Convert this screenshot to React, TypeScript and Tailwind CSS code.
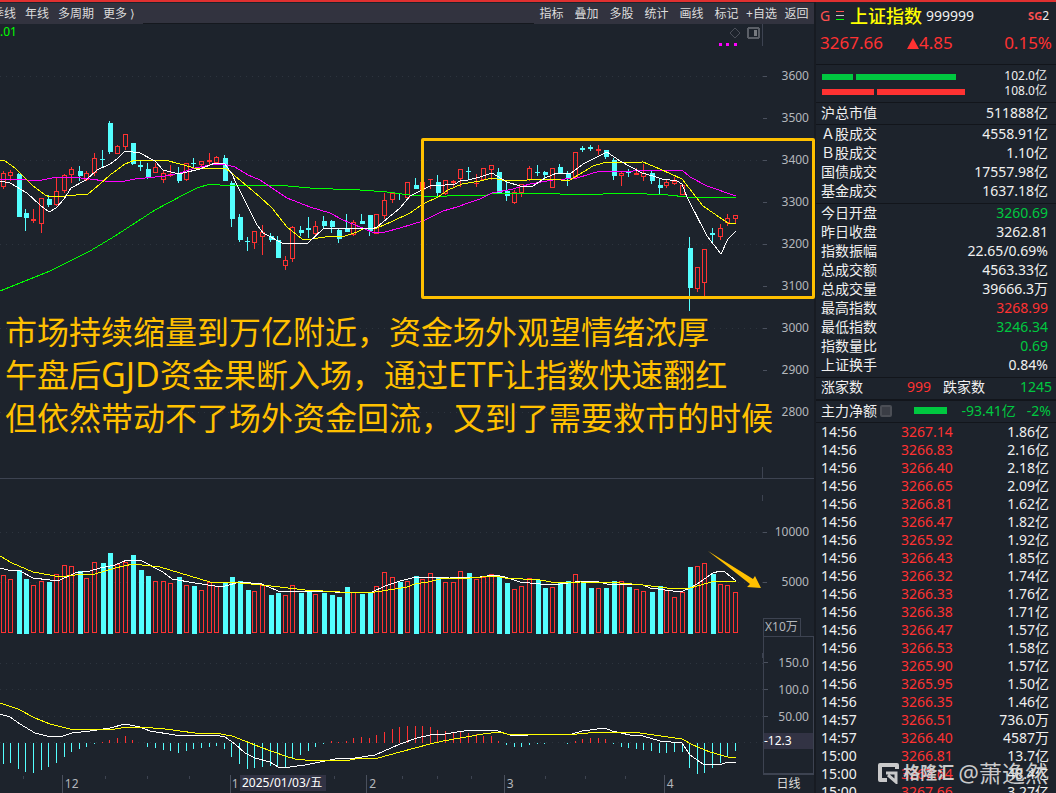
import React from 'react';

// direction (1 up, 0 down), high, body top, body bottom, low, volume top, macd bar
type Bar = [number, number, number, number, number, number, number];

const bars: Bar[] = [
  [1, 171, 173, 187, 189, 575, -21], [1, 170, 172, 176, 181, 579, -20], [0, 173, 174, 217, 217, 570, -26],
  [0, 209, 213, 218, 231, 579, -29], [1, 209, 219, 221, 223, 585, -30], [1, 198, 198, 224, 233, 581, -27],
  [0, 195, 199, 205, 207, 582, -24], [1, 178, 191, 205, 206, 574, -20], [1, 174, 175, 191, 193, 565, -14],
  [1, 167, 169, 175, 183, 566, -9], [0, 166, 171, 176, 181, 571, -6], [1, 171, 173, 180, 181, 578, -4],
  [1, 153, 158, 173, 176, 562, -1], [0, 150, 159, 160, 167, 563, 1], [0, 121, 123, 152, 154, 553, 3],
  [1, 145, 146, 154, 154, 564, 5], [1, 134, 134, 147, 150, 562, 7], [0, 143, 143, 164, 165, 555, 3],
  [0, 161, 165, 167, 171, 570, 0], [0, 163, 169, 177, 179, 576, -4], [1, 163, 167, 173, 173, 581, -5],
  [1, 170, 173, 180, 183, 581, -7], [1, 165, 174, 176, 177, 583, -8], [0, 167, 174, 181, 183, 577, -10],
  [1, 163, 163, 180, 181, 585, -8], [0, 158, 163, 164, 168, 586, -6], [1, 161, 161, 165, 169, 590, -5],
  [1, 153, 160, 162, 165, 582, -4], [1, 156, 157, 163, 163, 586, -3], [0, 155, 158, 181, 181, 583, -6],
  [0, 181, 183, 219, 227, 577, -14], [0, 214, 217, 240, 242, 581, -21], [0, 237, 241, 242, 251, 590, -26],
  [1, 231, 231, 243, 249, 591, -25], [1, 225, 232, 237, 255, 585, -24], [0, 233, 236, 240, 242, 595, -23],
  [0, 236, 240, 258, 258, 593, -24], [1, 256, 260, 266, 270, 595, -24], [1, 226, 227, 259, 262, 585, -16],
  [0, 226, 230, 233, 236, 593, -12], [0, 217, 228, 230, 238, 590, -8], [1, 221, 226, 234, 236, 594, -4],
  [0, 216, 221, 226, 228, 593, -1], [0, 220, 221, 227, 233, 595, 2], [0, 229, 230, 239, 243, 597, 1],
  [0, 214, 229, 232, 232, 587, 2], [1, 220, 222, 235, 236, 592, 5], [0, 214, 221, 224, 224, 594, 6],
  [0, 215, 215, 231, 236, 592, 5], [1, 214, 214, 234, 234, 586, 8], [1, 193, 200, 216, 219, 572, 11],
  [1, 193, 193, 200, 203, 577, 14], [0, 193, 193, 194, 200, 582, 16], [1, 182, 182, 198, 198, 581, 17],
  [0, 178, 185, 189, 189, 576, 17], [1, 182, 182, 190, 190, 579, 17], [1, 179, 179, 180, 189, 573, 16],
  [0, 175, 182, 193, 196, 577, 13], [1, 180, 180, 194, 195, 582, 12], [1, 180, 181, 183, 187, 582, 11],
  [1, 169, 169, 179, 187, 571, 11], [0, 167, 171, 172, 180, 573, 10], [1, 174, 183, 184, 187, 579, 9],
  [1, 168, 168, 180, 180, 577, 7], [1, 165, 165, 170, 180, 574, 7], [0, 168, 172, 193, 194, 577, 2],
  [0, 182, 191, 196, 201, 583, -2], [1, 190, 192, 203, 204, 589, -4], [1, 184, 184, 193, 197, 586, -4],
  [1, 166, 168, 180, 181, 578, -2], [0, 165, 172, 173, 176, 580, -1], [0, 171, 172, 175, 180, 588, -1],
  [1, 168, 168, 188, 188, 587, 0], [0, 164, 167, 173, 174, 583, 0], [0, 171, 173, 178, 186, 581, -1],
  [1, 152, 152, 177, 178, 574, 2], [0, 146, 148, 150, 152, 581, 4], [0, 145, 147, 149, 151, 588, 5],
  [1, 145, 149, 151, 155, 588, 5], [0, 150, 150, 157, 159, 588, 4], [0, 158, 160, 176, 180, 581, -1],
  [1, 171, 173, 176, 186, 581, -4], [0, 169, 172, 173, 177, 587, -5], [1, 168, 173, 175, 175, 589, -6],
  [1, 164, 173, 177, 181, 591, -7], [0, 171, 173, 181, 184, 592, -8], [0, 178, 185, 188, 194, 586, -10],
  [1, 180, 182, 186, 188, 590, -10], [1, 177, 181, 184, 185, 597, -9], [1, 184, 185, 195, 195, 592, -9],
  [0, 237, 248, 288, 311, 567, -25], [1, 267, 267, 289, 292, 566, -31], [1, 249, 249, 283, 296, 563, -30],
  [0, 228, 233, 235, 244, 574, -25], [1, 224, 228, 237, 240, 584, -20], [1, 214, 218, 223, 226, 585, -13],
  [1, 215, 215, 219, 224, 592, -8],
];

const barX = (i: number) => Math.floor(1 + i * 7.63);

const UP = '#ff3232';
const DOWN = '#54ffff';

const priceLines = [
  {
    color: '#00ff00',
    points:
      '0,291 15,285 50,271 90,251 115,236 135,223 155,210 185,194 197,188 210,184 220,185 253,186 277,185 310,188 333,189 360,190 387,192 410,195 423,196 447,196 487,195 493,193 557,193 560,194 603,194 607,193 643,193 647,194 665,194 668,195 687,197 736,197',
  },
  {
    color: '#ff00ff',
    points:
      '0,179 20,179 27,180 42,180 52,178 72,177 90,179 105,181 125,181 135,179 165,176 180,173 195,168 215,164 227,165 235,167 248,175 260,180 272,188 287,198 310,207 330,213 343,220 360,227 372,232 385,232 400,228 423,221 443,211 457,207 468,203 480,199 492,193 513,189 530,184 553,180 577,178 600,171 633,171 663,170 682,170 690,177 707,186 736,196',
  },
  {
    color: '#ffff00',
    points:
      '0,160 5,161 15,168 32,185 45,195 50,197 65,196 88,194 100,184 110,175 125,164 135,160 165,160 180,164 198,169 225,168 235,176 247,186 260,197 272,208 287,227 302,239 312,239 325,237 345,236 357,232 363,229 377,228 393,221 410,213 423,204 438,197 448,190 462,184 480,181 492,178 507,181 527,180 553,179 568,181 580,174 593,166 603,163 643,162 660,169 682,179 703,206 722,219 728,223 736,224',
  },
  {
    color: '#ffffff',
    points:
      '0,181 10,183 27,193 40,205 49,212 56,208 64,199 71,188 86,180 97,170 110,164 117,159 125,151 140,153 155,161 163,170 179,174 200,169 215,163 225,164 232,174 237,185 257,225 263,233 284,244 308,243 324,228 353,229 358,228 372,229 377,227 400,208 410,196 422,190 432,185 445,185 455,184 460,181 468,180 480,177 492,173 507,182 520,186 533,186 545,178 557,173 570,174 583,164 607,152 620,161 642,173 653,176 662,179 677,181 682,184 687,197 707,236 721,254 728,239 736,231',
  },
];

const volumeLines = [
  {
    color: '#ffffff',
    points:
      '0,568 8,570 20,571 33,578 50,580 60,580 75,573 90,571 100,568 115,565 127,560 142,561 163,572 172,579 195,583 215,586 225,586 240,582 262,584 278,591 325,591 345,593 372,592 385,586 400,581 412,578 450,577 480,577 495,575 505,577 520,582 540,584 560,584 583,581 595,581 607,584 643,585 650,588 673,591 683,591 692,587 700,582 713,573 720,571 725,572 736,581',
  },
  {
    color: '#ffff00',
    points:
      '0,556 12,563 33,572 50,575 60,577 75,575 95,574 115,568 133,564 160,567 180,573 210,582 240,583 262,585 280,587 305,590 340,592 375,592 395,589 407,587 415,584 428,582 440,579 470,578 495,576 505,578 540,580 557,583 580,582 620,583 643,585 667,588 690,588 715,581 736,581',
  },
];

const macdLines = [
  {
    color: '#ffffff',
    points:
      '0,714 10,717 20,724 35,733 47,736 63,736 72,733 90,731 110,728 125,724 140,727 150,731 175,735 215,735 225,737 235,744 245,753 255,758 270,762 278,767 290,767 305,765 320,762 335,759 355,758 375,755 400,744 417,738 430,735 445,734 470,730 495,730 510,735 528,735 537,734 572,734 582,731 605,728 612,731 630,735 643,736 660,741 682,743 690,755 703,764 722,764 728,762 736,762',
  },
  {
    color: '#ffff00',
    points:
      '0,703 18,709 35,718 50,724 70,729 115,729 128,727 140,727 165,729 195,733 215,733 232,736 245,741 260,747 285,756 295,759 315,761 350,760 360,758 378,758 400,752 430,744 443,741 460,738 472,736 483,734 500,732 507,734 577,734 600,732 633,732 682,739 693,745 710,752 728,757 736,757',
  },
];

const leftTabs = ['季线', '年线', '多周期', '更多 ⟩'];
const rightTabs = ['指标', '叠加', '多股', '统计', '画线', '标记', '+自选', '返回'];
const priceScale = ['3600', '3500', '3400', '3300', '3200', '3100', '3000', '2900', '2800'];
const macdScale = ['150.0', '100.0', '50.00'];

const turnover = [
  ['Ａ股成交', '4558.91亿'],
  ['Ｂ股成交', '1.10亿'],
  ['国债成交', '17557.98亿'],
  ['基金成交', '1637.18亿'],
];

const WHITE = 'text-[#f0f0f0]';
const RED = 'text-[#ff3232]';
const GREEN = 'text-[#00c840]';

const indexStats = [
  ['今日开盘', '3260.69', GREEN],
  ['昨日收盘', '3262.81', WHITE],
  ['指数振幅', '22.65/0.69%', WHITE],
  ['总成交额', '4563.33亿', WHITE],
  ['总成交量', '39666.3万', WHITE],
  ['最高指数', '3268.99', RED],
  ['最低指数', '3246.34', GREEN],
  ['指数量比', '0.69', GREEN],
  ['上证换手', '0.84%', WHITE],
];

const ticks = [
  ['14:56', '3267.14', '1.86亿'],
  ['14:56', '3266.83', '2.16亿'],
  ['14:56', '3266.40', '2.18亿'],
  ['14:56', '3266.65', '2.09亿'],
  ['14:56', '3266.81', '1.62亿'],
  ['14:56', '3266.47', '1.82亿'],
  ['14:56', '3265.92', '1.92亿'],
  ['14:56', '3266.43', '1.85亿'],
  ['14:56', '3266.32', '1.74亿'],
  ['14:56', '3266.33', '1.76亿'],
  ['14:56', '3266.38', '1.71亿'],
  ['14:56', '3266.47', '1.57亿'],
  ['14:56', '3266.53', '1.58亿'],
  ['14:56', '3265.90', '1.57亿'],
  ['14:56', '3265.95', '1.50亿'],
  ['14:56', '3266.35', '1.46亿'],
  ['14:57', '3266.51', '736.0万'],
  ['14:57', '3266.40', '4587万'],
  ['15:00', '3266.81', '13.7亿'],
  ['15:00', '3267.64', '48.4亿'],
  ['15:00', '3267.66', '3.27亿'],
];

const Lines: React.FC<{ lines: { color: string; points: string }[] }> = ({ lines }) => (
  <g fill="none" strokeWidth={1}>
    {lines.map((line) => (
      <polyline key={line.color} points={line.points} stroke={line.color} />
    ))}
  </g>
);

const Grid: React.FC<{ rows: number[] }> = ({ rows }) => (
  <g stroke="#2d343e" strokeDasharray="1 5">
    {rows.map((y) => (
      <line key={y} x1={0} x2={763} y1={y + 0.5} y2={y + 0.5} />
    ))}
  </g>
);

const Candle: React.FC<{ bar: Bar; index: number }> = ({ bar, index }) => {
  const [up, high, top, bottom, low] = bar;
  const x = barX(index);
  const h = bottom - top;
  if (!up || h < 3) {
    return (
      <g fill={up ? UP : DOWN}>
        <rect x={x + 2} y={high} width={1} height={low - high} />
        <rect x={up ? x : x + (h < 3 ? 0 : 1)} y={top} width={5} height={h} />
      </g>
    );
  }
  return (
    <g>
      <rect x={x + 2} y={high} width={1} height={top - high} fill={UP} />
      <rect x={x + 2} y={bottom} width={1} height={low - bottom} fill={UP} />
      <rect x={x + 0.5} y={top + 0.5} width={4} height={h - 1} fill="none" stroke={UP} />
    </g>
  );
};

const PriceChart = () => (
  <svg
    className="block h-full w-full"
    viewBox="0 24 763 454"
    preserveAspectRatio="none"
    shapeRendering="crispEdges"
    aria-label="日K线"
  >
    <Grid rows={[76, 160, 244, 328, 412]} />
    {bars.map((bar, i) => (
      <Candle key={i} bar={bar} index={i} />
    ))}
    <Lines lines={priceLines} />
    <path d="M735 28 L740 33 L735 38 L730 33 Z" fill="none" stroke="#4a4e58" shapeRendering="auto" />
    <rect x={748} y={28} width={11} height={10} rx={2} fill="none" stroke="#5b5f67" strokeWidth={2} />
    <rect x={754} y={30} width={3} height={6} fill="#777a80" />
    <g fill="#ff00ff">
      <rect x={719} y={43} width={3} height={3} />
      <rect x={726} y={43} width={3} height={3} />
      <rect x={734} y={43} width={3} height={3} />
    </g>
    <rect x={762} y={24} width={1} height={22} fill="#3d4351" />
    <rect x={762} y={467} width={1} height={11} fill="#3d4351" />
  </svg>
);

const VolumeChart = () => (
  <svg
    className="block h-full w-full"
    viewBox="0 479 763 157"
    preserveAspectRatio="none"
    shapeRendering="crispEdges"
    aria-label="成交量"
  >
    <Grid rows={[532, 582]} />
    {bars.map(([up, , , , , top], i) =>
      up ? (
        <rect key={i} x={barX(i) + 0.5} y={top + 0.5} width={4} height={632 - top} fill="none" stroke={UP} />
      ) : (
        <rect key={i} x={barX(i) + 1} y={top} width={5} height={634 - top} fill={DOWN} />
      )
    )}
    <Lines lines={volumeLines} />
    <rect x={762} y={495} width={1} height={6} fill="#3d4351" />
    <path d="M708 551 L753 579 L755 576 L761 588 L747 587 L750 584 Z" fill="#ffc000" shapeRendering="auto" />
  </svg>
);

const MacdChart = () => (
  <svg
    className="block h-full w-full"
    viewBox="0 636 763 143"
    preserveAspectRatio="none"
    shapeRendering="crispEdges"
    aria-label="MACD"
  >
    <Grid rows={[663, 689, 716, 742]} />
    {bars.map(([, , , , , , v], i) => (
      <rect
        key={i}
        x={barX(i) + 2}
        y={v > 0 ? 743 - v : 743}
        width={1}
        height={Math.abs(v)}
        fill={v > 0 ? UP : DOWN}
      />
    ))}
    <Lines lines={macdLines} />
    <rect x={762} y={653} width={1} height={5} fill="#3d4351" />
    <g fill="#3d4351">
      {[23, 105, 147, 189, 334, 402, 437, 471, 545, 585, 625].map((x) => (
        <rect key={x} x={x} y={776} width={1} height={3} />
      ))}
    </g>
  </svg>
);

const Toolbar = () => (
  <nav className="mt-px flex h-[21px] shrink-0 items-center overflow-hidden bg-[#32333f] text-[12px] text-[#dcdcdc]">
    <div className="-ml-2 flex gap-[9px]">
      {leftTabs.map((tab) => (
        <button key={tab} type="button" className="whitespace-nowrap">
          {tab}
        </button>
      ))}
    </div>
    <div className="ml-2 h-px flex-1 self-end bg-[#15181e]" />
    <div className="flex">
      {rightTabs.map((tab) => (
        <button key={tab} type="button" className="w-[35px] whitespace-nowrap text-center">
          {tab}
        </button>
      ))}
    </div>
  </nav>
);

const TimeAxis = () => (
  <div className="relative flex h-[18px] shrink-0 text-[12px] leading-[18px] text-[#b4b7bc]">
    <div className="flex flex-1">
      <div className="flex-[63]" />
      <div className="flex-[168] border-l border-[#4a505d] pl-[2px]">12</div>
      <div className="flex-[137] border-l border-[#4a505d] pl-px">1</div>
      <div className="flex-[137] border-l border-[#4a505d] pl-[2px]">2</div>
      <div className="flex-[160] border-l border-[#4a505d] pl-[2px]">3</div>
      <div className="flex-[98] border-l border-[#4a505d] pl-[2px]">4</div>
    </div>
    <div className="w-[51px] text-center text-[#dcdcdc]">日线</div>
    <div className="absolute left-[240px] top-0 h-4 w-[86px] whitespace-nowrap bg-[#323344] pl-[2px] leading-4 text-white">
      2025/01/03/五
    </div>
  </div>
);

const Charts = () => (
  <main className="flex min-w-0 flex-1 flex-col">
    <Toolbar />
    <section className="relative flex min-h-0 flex-1 border-b border-[#3d4351]">
      <div className="min-w-0 flex-1">
        <PriceChart />
      </div>
      <div className="w-[51px] shrink-0 pt-[31px] text-[12px] text-[#b4b7bc]">
        {priceScale.map((label) => (
          <div key={label} className="flex h-[42px] items-center justify-between pr-[5px]">
            <span className="h-px w-1 bg-[#4a505d]" />
            {label}
          </div>
        ))}
      </div>
      <span className="absolute left-0 top-0 text-[12px] leading-4 text-[#00ff00]">.01</span>
      <div className="absolute -right-px left-[421px] top-[114px] h-[161px] rounded-[2px] border-3 border-[#ffc000]" />
      <p className="absolute left-[5px] top-[286px] whitespace-nowrap text-[32px] leading-[43px] text-[#ffc000]">
        市场持续缩量到万亿附近，资金场外观望情绪浓厚
        <br />
        午盘后<span className="text-[34px] leading-8">GJD</span>资金果断入场，通过
        <span className="text-[34px] leading-8">ETF</span>让指数快速翻红
        <br />
        但依然带动不了场外资金回流，又到了需要救市的时候
      </p>
    </section>
    <section className="flex h-[157px] shrink-0">
      <div className="min-w-0 flex-1">
        <VolumeChart />
      </div>
      <div className="flex w-[51px] shrink-0 flex-col text-[12px] text-[#b4b7bc]">
        <div className="mt-[43px] flex h-5 items-center justify-between pr-[5px]">
          <span className="h-px w-1 bg-[#4a505d]" />
          10000
        </div>
        <div className="mt-[30px] flex h-5 items-center justify-between pr-[5px]">
          <span className="h-px w-1 bg-[#4a505d]" />
          5000
        </div>
        <div className="mt-auto h-[18px] w-[38px] whitespace-nowrap border border-b-0 border-[#3d4351] pl-px leading-4">
          X10万
        </div>
      </div>
    </section>
    <section className="flex h-[139px] shrink-0">
      <div className="h-[143px] min-w-0 flex-1">
        <MacdChart />
      </div>
      <div className="w-[51px] shrink-0 border border-b-2 border-[#3d4351] pt-3 text-[12px] text-[#b4b7bc]">
        {macdScale.map((label) => (
          <div key={label} className="flex h-[27px] items-center justify-between pr-1">
            <span className="h-px w-1 bg-[#4a505d]" />
            {label}
          </div>
        ))}
        <div className="mt-[3px] h-4 bg-[#323344] leading-4 text-white">-12.3</div>
      </div>
    </section>
    <TimeAxis />
  </main>
);

const Row: React.FC<{ label: string; value: string; color?: string }> = ({ label, value, color = WHITE }) => (
  <div className="flex h-[19px] justify-between leading-[17px]">
    <dt>{label}</dt>
    <dd className={color}>{value}</dd>
  </div>
);

const QuotePanel = () => (
  <aside className="w-[242px] shrink-0 border-l-2 border-[#171b22] text-[14px] leading-[18px] text-[#f0f0f0]">
    <header className="h-[63px] border-b border-[#12151b] pl-1 pr-1">
      <div className="flex h-7 items-center">
        <span className="w-4 text-[14px] text-[#ff5050]">G</span>
        <svg className="h-3 w-2" viewBox="0 0 8 12" shapeRendering="crispEdges">
          <rect y={1} width={8} height={1} fill="#ff5050" />
          <rect y={5} width={8} height={1} fill="#c8c8c8" />
          <rect y={9} width={8} height={1} fill="#00ff00" />
        </svg>
        <h1 className="ml-[6px] text-[18px] font-medium text-[#ffff00]">上证指数</h1>
        <span className="ml-1">999999</span>
        <span className="ml-auto pr-[3px] text-[12px]">
          <b className="text-[11px] text-[#ff5050]">SG</b>2
        </span>
      </div>
      <div className="flex h-[26px] items-center text-[17px] text-[#ff3232]">
        <span className="w-[87px]">3267.66</span>
        <svg className="h-[11px] w-3" viewBox="0 0 12 11">
          <path d="M6 0 L12 11 L0 11 Z" fill="#ff3232" />
        </svg>
        <span>4.85</span>
        <span className="ml-auto">0.15%</span>
      </div>
    </header>
    <div className="border-b border-[#12151b] py-[3px] pl-[6px] pr-[9px] text-[12px] leading-[15px]">
      <div className="mt-px flex h-[15px] items-center gap-[3px]">
        <span className="h-[6px] w-[31px] bg-[#00c840]" />
        <span className="h-[6px] w-[100px] bg-[#00c840]" />
        <span className="ml-auto pb-[2px]">102.0亿</span>
      </div>
      <div className="flex h-[15px] items-center gap-[3px]">
        <span className="h-[6px] w-[52px] bg-[#ff3232]" />
        <span className="h-[6px] w-[88px] bg-[#ff3232]" />
        <span className="ml-auto pb-[2px]">108.0亿</span>
      </div>
    </div>
    <dl className="border-b border-[#12151b] py-px pl-[5px] pr-2">
      <Row label="沪总市值" value="511888亿" />
    </dl>
    <dl className="border-b border-[#12151b] pb-[2px] pl-[5px] pr-2">
      {turnover.map(([label, value]) => (
        <Row key={label} label={label} value={value} />
      ))}
    </dl>
    <dl className="border-b border-[#12151b] pb-[2px] pl-[5px] pr-2">
      {indexStats.map(([label, value, color]) => (
        <Row key={label} label={label} value={value} color={color} />
      ))}
    </dl>
    <div className="flex border-b-2 border-[#12151b] pb-[3px] pl-[5px] pr-1">
      <span>涨家数</span>
      <span className="ml-auto text-[#ff3232]">999</span>
      <span className="ml-3">跌家数</span>
      <span className="w-[67px] text-right text-[#00c840]">1245</span>
    </div>
    <div className="flex h-[22px] items-center border-b border-[#12151b] pb-[2px] pl-[5px] pr-[5px]">
      <span>主力净额</span>
      <span className="ml-[3px] h-3 w-3 rounded-[2px] border-2 border-[#4b4e55] bg-[#3a3d45]" />
      <span className="ml-[22px] h-[7px] w-[33px] bg-[#00c840]" />
      <span className="ml-auto text-[#00c840]">-93.41亿</span>
      <span className="ml-[11px] text-[#00c840]">-2%</span>
    </div>
    <table className="w-full">
      <tbody>
        {ticks.map(([time, price, amount], i) => (
          <tr key={i} className="h-[18px]">
            <td className="w-[80px] p-0 pl-[5px]">{time}</td>
            <td className="p-0 pl-[5px] text-[#ff3232]">{price}</td>
            <td className="p-0 pr-[7px] text-right">{amount}</td>
          </tr>
        ))}
      </tbody>
    </table>
  </aside>
);

const Watermark = () => (
  <div className="absolute bottom-2 right-2 flex items-center text-[#dcdcdc] opacity-90">
    <svg className="h-[22px] w-[22px]" viewBox="0 0 22 22" fill="none" stroke="currentColor">
      <path d="M20 7 V3 H3 V18 H10" strokeWidth={4} strokeLinejoin="round" />
      <path d="M9 11 H19 V20 L11 13" strokeWidth={3} />
    </svg>
    <span className="ml-1 text-[17px] font-bold leading-6">格隆汇</span>
    <span className="ml-1 text-[23px] leading-6">@萧逸然</span>
  </div>
);

export default function App() {
  return (
    <div className="relative flex h-screen flex-col overflow-hidden bg-[#1d232c] font-['Noto_Sans','Noto_Sans_CJK_SC',sans-serif]">
      <div className="h-[2px] shrink-0 bg-[#e03030]" />
      <div className="flex min-h-0 flex-1">
        <Charts />
        <QuotePanel />
      </div>
      <Watermark />
    </div>
  );
}
